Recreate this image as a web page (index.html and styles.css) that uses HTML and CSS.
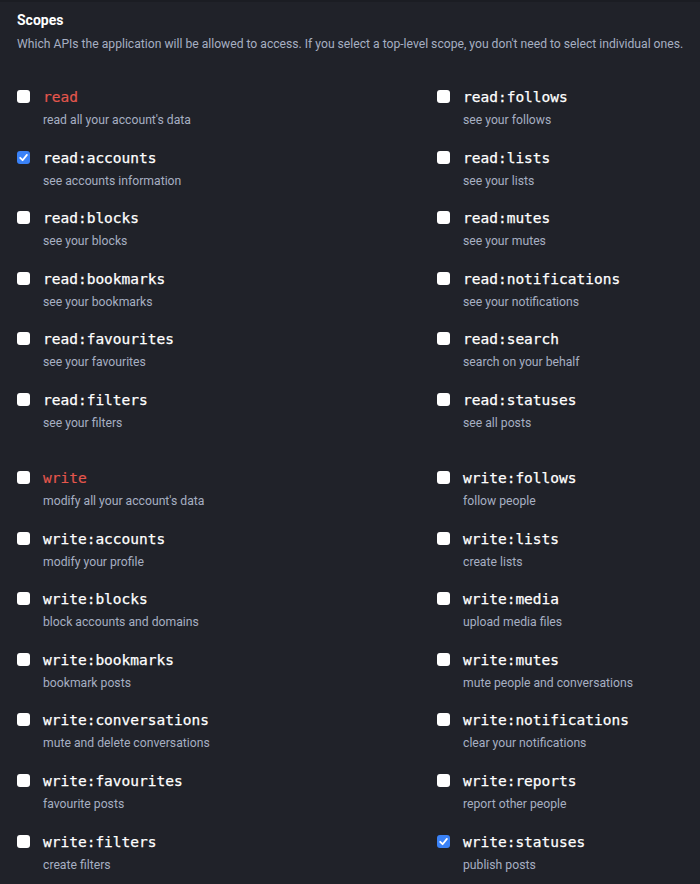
FILE: index.html
```html
<!DOCTYPE html>
<html lang="en">

<head>
    <meta charset="UTF-8">
    <meta name="viewport" content="width=device-width, initial-scale=1.0">
    <title>Scopes</title>
    <link rel="stylesheet" href="styles.css">
</head>

<body>
    <div class="scopes">
        <h2 class="scopes-title">Scopes</h2>
        <p class="scopes-hint">Which APIs the application will be allowed to access. If you select a top-level scope, you don't need to select individual ones.</p>

        <!-- read -->
        <ul class="scope-group">
            <li class="scope"><span class="box"></span><div><code class="name top">read</code><span class="desc">read all your account's data</span></div></li>
            <li class="scope"><span class="box"></span><div><code class="name">read:follows</code><span class="desc">see your follows</span></div></li>
            <li class="scope"><span class="box checked"><svg viewBox="0 0 13 13"><path d="M3.2 6.8 L5.6 9.2 L9.9 3.9" /></svg></span><div><code class="name">read:accounts</code><span class="desc">see accounts information</span></div></li>
            <li class="scope"><span class="box"></span><div><code class="name">read:lists</code><span class="desc">see your lists</span></div></li>
            <li class="scope"><span class="box"></span><div><code class="name">read:blocks</code><span class="desc">see your blocks</span></div></li>
            <li class="scope"><span class="box"></span><div><code class="name">read:mutes</code><span class="desc">see your mutes</span></div></li>
            <li class="scope"><span class="box"></span><div><code class="name">read:bookmarks</code><span class="desc">see your bookmarks</span></div></li>
            <li class="scope"><span class="box"></span><div><code class="name">read:notifications</code><span class="desc">see your notifications</span></div></li>
            <li class="scope"><span class="box"></span><div><code class="name">read:favourites</code><span class="desc">see your favourites</span></div></li>
            <li class="scope"><span class="box"></span><div><code class="name">read:search</code><span class="desc">search on your behalf</span></div></li>
            <li class="scope"><span class="box"></span><div><code class="name">read:filters</code><span class="desc">see your filters</span></div></li>
            <li class="scope"><span class="box"></span><div><code class="name">read:statuses</code><span class="desc">see all posts</span></div></li>
        </ul>

        <!-- write -->
        <ul class="scope-group">
            <li class="scope"><span class="box"></span><div><code class="name top">write</code><span class="desc">modify all your account's data</span></div></li>
            <li class="scope"><span class="box"></span><div><code class="name">write:follows</code><span class="desc">follow people</span></div></li>
            <li class="scope"><span class="box"></span><div><code class="name">write:accounts</code><span class="desc">modify your profile</span></div></li>
            <li class="scope"><span class="box"></span><div><code class="name">write:lists</code><span class="desc">create lists</span></div></li>
            <li class="scope"><span class="box"></span><div><code class="name">write:blocks</code><span class="desc">block accounts and domains</span></div></li>
            <li class="scope"><span class="box"></span><div><code class="name">write:media</code><span class="desc">upload media files</span></div></li>
            <li class="scope"><span class="box"></span><div><code class="name">write:bookmarks</code><span class="desc">bookmark posts</span></div></li>
            <li class="scope"><span class="box"></span><div><code class="name">write:mutes</code><span class="desc">mute people and conversations</span></div></li>
            <li class="scope"><span class="box"></span><div><code class="name">write:conversations</code><span class="desc">mute and delete conversations</span></div></li>
            <li class="scope"><span class="box"></span><div><code class="name">write:notifications</code><span class="desc">clear your notifications</span></div></li>
            <li class="scope"><span class="box"></span><div><code class="name">write:favourites</code><span class="desc">favourite posts</span></div></li>
            <li class="scope"><span class="box"></span><div><code class="name">write:reports</code><span class="desc">report other people</span></div></li>
            <li class="scope"><span class="box"></span><div><code class="name">write:filters</code><span class="desc">create filters</span></div></li>
            <li class="scope"><span class="box checked"><svg viewBox="0 0 13 13"><path d="M3.2 6.8 L5.6 9.2 L9.9 3.9" /></svg></span><div><code class="name">write:statuses</code><span class="desc">publish posts</span></div></li>
        </ul>
    </div>
</body>

</html>
```

FILE: styles.css
```css
body {
    margin: 0;
    background-color: #202229;
    border-top: 2px solid #1b1d23;
    color: #fff;
    font-family: Roboto, "Liberation Sans", sans-serif;
}

.scopes {
    padding: 8px 17px 0;
}

.scopes-title {
    margin: 0;
    font-size: 14px;
    font-weight: 700;
    line-height: 20px;
}

.scopes-hint {
    margin: 4px 0 0;
    font-size: 12.15px;
    line-height: 20px;
    white-space: nowrap;
    color: #a6afc2;
}

/* две колонки чекбоксов */
.scope-group {
    list-style: none;
    margin: 32px 0 0;
    padding: 0;
    display: grid;
    grid-template-columns: 420px 1fr;
    row-gap: 16.6px;
}

.scope-group + .scope-group {
    margin-top: 34px;
}

.scope {
    display: flex;
    align-items: flex-start;
    gap: 13px;
}

.box {
    flex: none;
    width: 13px;
    height: 13px;
    margin-top: 4px;
    border-radius: 3px;
    background-color: #fff;
    box-sizing: border-box;
}

.box.checked {
    background-color: #3a82f7;
}

.box svg {
    display: block;
    width: 13px;
    height: 13px;
    fill: none;
    stroke: #fff;
    stroke-width: 1.8;
    stroke-linecap: round;
    stroke-linejoin: round;
}

.name {
    display: block;
    font-family: "DejaVu Sans Mono", monospace;
    font-size: 14.5px;
    line-height: 22px;
    color: #fff;
    -webkit-text-stroke: 0.25px #fff;
}

.name.top {
    color: #e5574d;
    -webkit-text-stroke: 0.15px #e5574d;
}

.desc {
    display: block;
    margin-top: 3px;
    font-size: 12.2px;
    line-height: 19px;
    color: #a6afc2;
}
```
